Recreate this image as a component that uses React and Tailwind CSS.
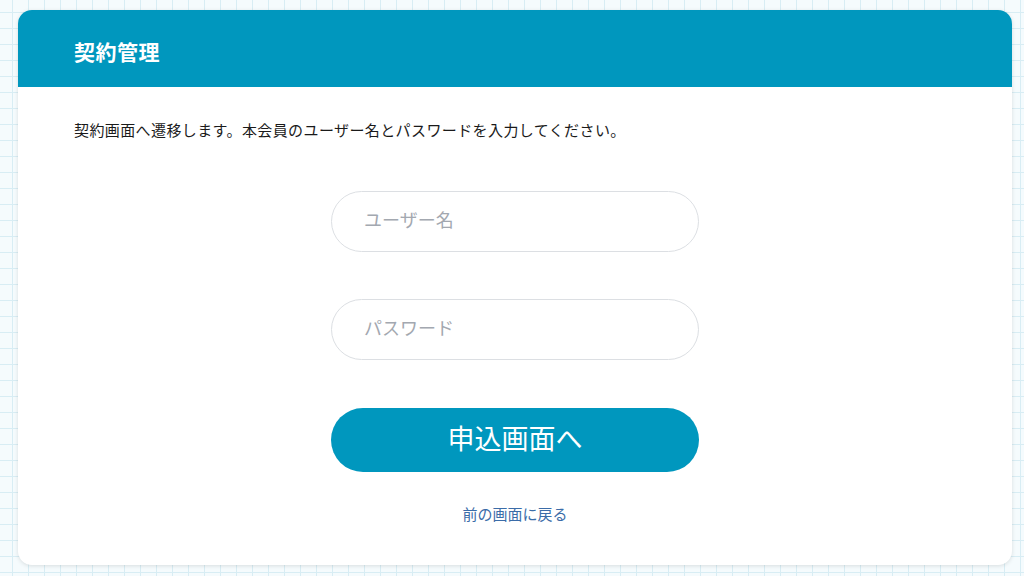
import React from "react";

export default function App() {
  return (
    <div
      className="w-[1024px] h-[576px] bg-[#f5fbfd] bg-[linear-gradient(#d8edf4_1px,transparent_1px),linear-gradient(90deg,#d8edf4_1px,transparent_1px)] bg-[size:16px_16px] bg-[position:-4px_-4px] pt-[10px] pl-[18px] pr-[12px] pb-[11px] overflow-hidden"
      style={{ fontFamily: '"Liberation Sans","Noto Sans CJK JP",sans-serif' }}
    >
      <div className="h-full bg-white rounded-[14px] overflow-hidden flex flex-col shadow-[0_1px_4px_rgba(0,0,0,0.12)]">
        <div className="h-[77px] shrink-0 bg-[#0097be] flex items-center px-[56px] pt-[9px]">
          <h1 className="text-white text-[21px] font-bold tracking-[0.5px]">契約管理</h1>
        </div>
        <div className="flex-1 flex flex-col px-[56px] pt-[34px]">
          <p className="text-[15px] leading-[20px] tracking-[0.4px] text-[#1a1a1a]">
            契約画面へ遷移します。本会員のユーザー名とパスワードを入力してください。
          </p>
          <div className="flex flex-col items-center mt-[50px]">
            <input
              type="text"
              placeholder="ユーザー名"
              className="w-[368px] h-[61px] rounded-full border border-[#dcdfe3] pl-[32px] pr-[24px] text-[18px] text-[#333] placeholder:text-[#a3a8b0] outline-none bg-white"
            />
            <input
              type="password"
              placeholder="パスワード"
              className="mt-[47px] w-[368px] h-[61px] rounded-full border border-[#dcdfe3] pl-[32px] pr-[24px] text-[18px] text-[#333] placeholder:text-[#a3a8b0] outline-none bg-white"
            />
            <button className="mt-[48px] w-[368px] h-[64px] rounded-full bg-[#0097be] text-white text-[27px] flex items-center justify-center">
              申込画面へ
            </button>
            <a className="mt-[33px] text-[15px] leading-[20px] text-[#3b6ca8] cursor-pointer">
              前の画面に戻る
            </a>
          </div>
        </div>
      </div>
    </div>
  );
}
